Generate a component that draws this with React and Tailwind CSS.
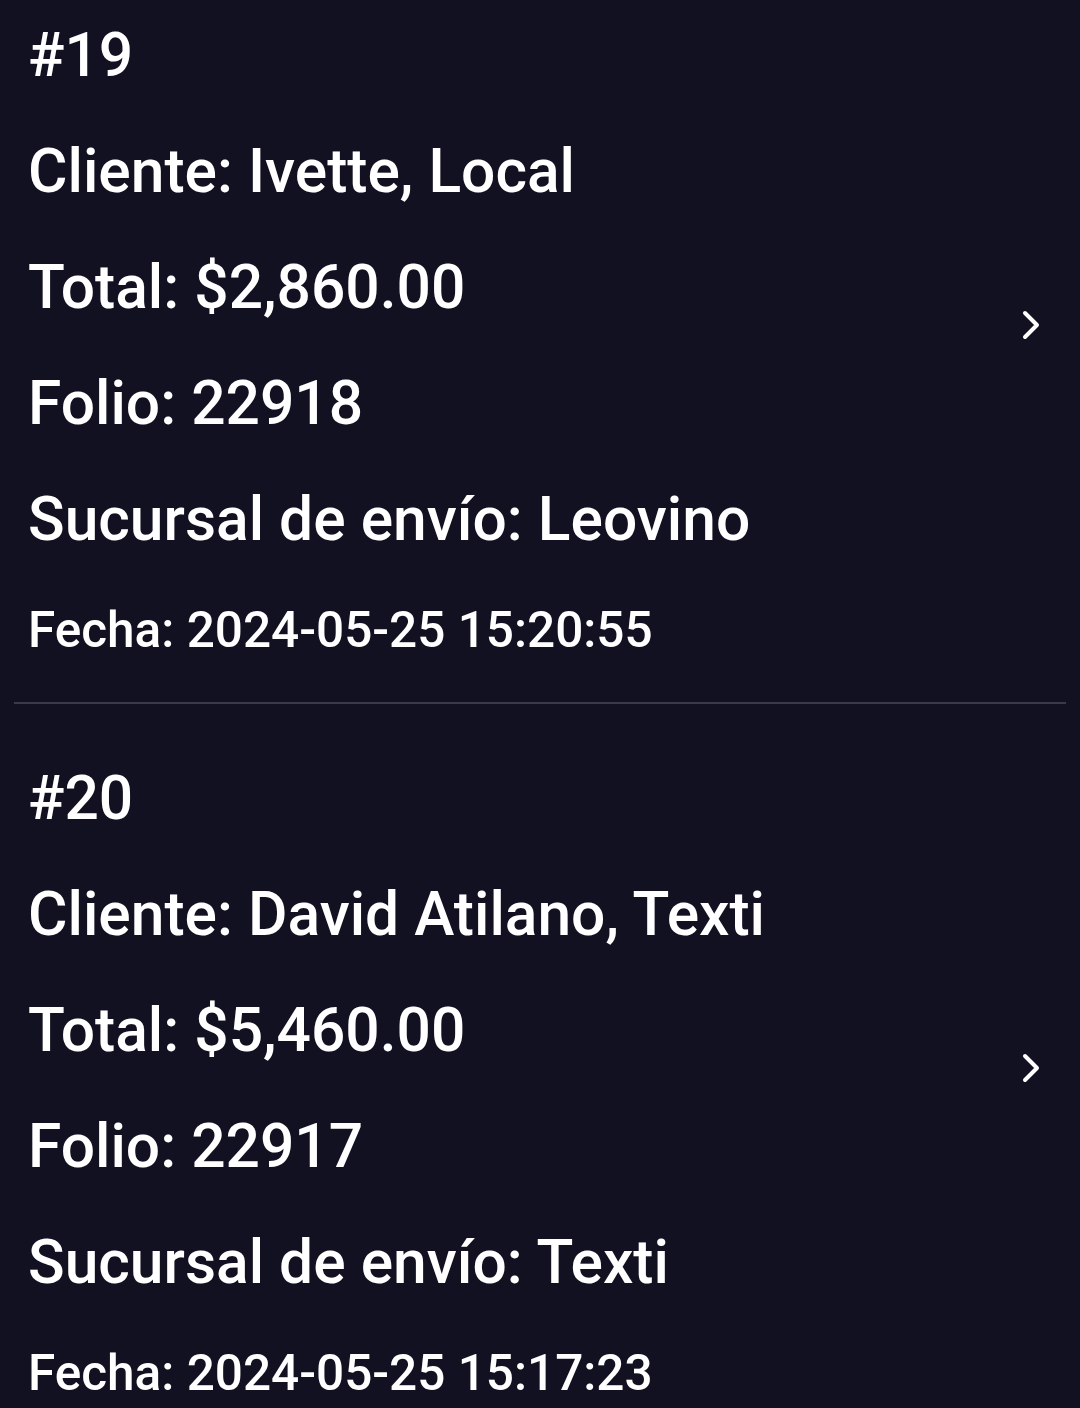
import React from 'react';

const orders = [
  {
    id: 19,
    cliente: 'Ivette, Local',
    total: '$2,860.00',
    folio: '22918',
    sucursal: 'Leovino',
    fecha: '2024-05-25 15:20:55',
  },
  {
    id: 20,
    cliente: 'David Atilano, Texti',
    total: '$5,460.00',
    folio: '22917',
    sucursal: 'Texti',
    fecha: '2024-05-25 15:17:23',
  },
];

const Chevron = () => (
  <svg width="18" height="30" viewBox="0 0 18 30" fill="none" className="shrink-0 -mt-[30px]">
    <path d="M3 3 L15 15 L3 27" stroke="white" strokeWidth="4" strokeLinecap="round" strokeLinejoin="round" />
  </svg>
);

const OrderRow = ({ order }) => (
  <div className="flex items-center pl-[28px] pr-[40px]">
    <div className="flex-1 text-white font-medium">
      <p className="text-[60.5px] leading-[116px]">#{order.id}</p>
      <p className="text-[60.5px] leading-[116px]">Cliente: {order.cliente}</p>
      <p className="text-[60.5px] leading-[116px]">Total: {order.total}</p>
      <p className="text-[60.5px] leading-[116px]">Folio: {order.folio}</p>
      <p className="text-[60.5px] leading-[116px]">Sucursal de envío: {order.sucursal}</p>
      <p className="text-[49.5px] leading-[104px]">Fecha: {order.fecha}</p>
    </div>
    <Chevron />
  </div>
);

export default function App() {
  return (
    <div
      className="min-h-[1408px] w-[1080px] bg-[#121122] overflow-hidden"
      style={{ fontFamily: 'Roboto, "Noto Sans", sans-serif' }}
    >
      <div className="-mt-[2px]">
        <OrderRow order={orders[0]} />
        <div className="mx-[14px] mt-[20px] mb-[37px] h-[2px] bg-[#3a3a48]" />
        <OrderRow order={orders[1]} />
      </div>
    </div>
  );
}
